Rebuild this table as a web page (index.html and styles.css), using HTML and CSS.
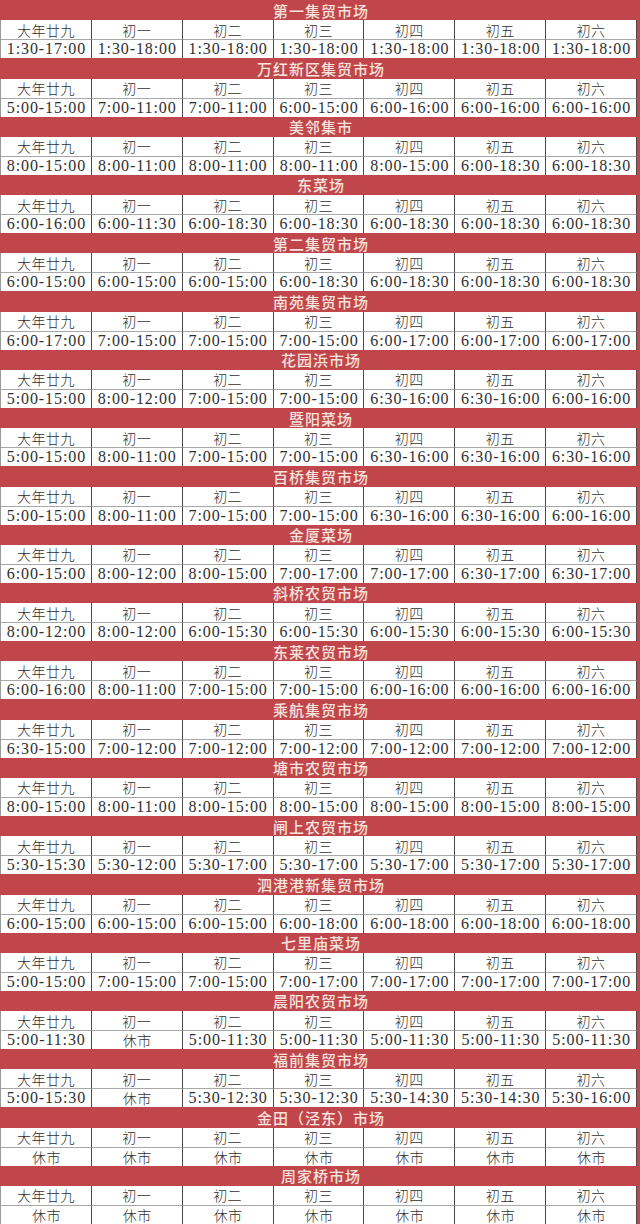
FILE: index.html
```html
<!DOCTYPE html>
<html lang="zh-CN">
<head>
<meta charset="utf-8">
<title>春节期间集贸市场营业时间</title>
<link rel="stylesheet" href="styles.css">
</head>
<body>
<div class="board">

<section class="market">
<div class="title">第一集贸市场</div>
<div class="c">大年廿九</div><div class="c">初一</div><div class="c">初二</div><div class="c">初三</div><div class="c">初四</div><div class="c">初五</div><div class="c">初六</div>
<div class="c t">1:30-17:00</div><div class="c t">1:30-18:00</div><div class="c t">1:30-18:00</div><div class="c t">1:30-18:00</div><div class="c t">1:30-18:00</div><div class="c t">1:30-18:00</div><div class="c t">1:30-18:00</div>
</section>

<section class="market">
<div class="title">万红新区集贸市场</div>
<div class="c">大年廿九</div><div class="c">初一</div><div class="c">初二</div><div class="c">初三</div><div class="c">初四</div><div class="c">初五</div><div class="c">初六</div>
<div class="c t">5:00-15:00</div><div class="c t">7:00-11:00</div><div class="c t">7:00-11:00</div><div class="c t">6:00-15:00</div><div class="c t">6:00-16:00</div><div class="c t">6:00-16:00</div><div class="c t">6:00-16:00</div>
</section>

<section class="market">
<div class="title">美邻集市</div>
<div class="c">大年廿九</div><div class="c">初一</div><div class="c">初二</div><div class="c">初三</div><div class="c">初四</div><div class="c">初五</div><div class="c">初六</div>
<div class="c t">8:00-15:00</div><div class="c t">8:00-11:00</div><div class="c t">8:00-11:00</div><div class="c t">8:00-11:00</div><div class="c t">8:00-15:00</div><div class="c t">6:00-18:30</div><div class="c t">6:00-18:30</div>
</section>

<section class="market">
<div class="title">东菜场</div>
<div class="c">大年廿九</div><div class="c">初一</div><div class="c">初二</div><div class="c">初三</div><div class="c">初四</div><div class="c">初五</div><div class="c">初六</div>
<div class="c t">6:00-16:00</div><div class="c t">6:00-11:30</div><div class="c t">6:00-18:30</div><div class="c t">6:00-18:30</div><div class="c t">6:00-18:30</div><div class="c t">6:00-18:30</div><div class="c t">6:00-18:30</div>
</section>

<section class="market">
<div class="title">第二集贸市场</div>
<div class="c">大年廿九</div><div class="c">初一</div><div class="c">初二</div><div class="c">初三</div><div class="c">初四</div><div class="c">初五</div><div class="c">初六</div>
<div class="c t">6:00-15:00</div><div class="c t">6:00-15:00</div><div class="c t">6:00-15:00</div><div class="c t">6:00-18:30</div><div class="c t">6:00-18:30</div><div class="c t">6:00-18:30</div><div class="c t">6:00-18:30</div>
</section>

<section class="market">
<div class="title">南苑集贸市场</div>
<div class="c">大年廿九</div><div class="c">初一</div><div class="c">初二</div><div class="c">初三</div><div class="c">初四</div><div class="c">初五</div><div class="c">初六</div>
<div class="c t">6:00-17:00</div><div class="c t">7:00-15:00</div><div class="c t">7:00-15:00</div><div class="c t">7:00-15:00</div><div class="c t">6:00-17:00</div><div class="c t">6:00-17:00</div><div class="c t">6:00-17:00</div>
</section>

<section class="market">
<div class="title">花园浜市场</div>
<div class="c">大年廿九</div><div class="c">初一</div><div class="c">初二</div><div class="c">初三</div><div class="c">初四</div><div class="c">初五</div><div class="c">初六</div>
<div class="c t">5:00-15:00</div><div class="c t">8:00-12:00</div><div class="c t">7:00-15:00</div><div class="c t">7:00-15:00</div><div class="c t">6:30-16:00</div><div class="c t">6:30-16:00</div><div class="c t">6:00-16:00</div>
</section>

<section class="market">
<div class="title">暨阳菜场</div>
<div class="c">大年廿九</div><div class="c">初一</div><div class="c">初二</div><div class="c">初三</div><div class="c">初四</div><div class="c">初五</div><div class="c">初六</div>
<div class="c t">5:00-15:00</div><div class="c t">8:00-11:00</div><div class="c t">7:00-15:00</div><div class="c t">7:00-15:00</div><div class="c t">6:30-16:00</div><div class="c t">6:30-16:00</div><div class="c t">6:30-16:00</div>
</section>

<section class="market">
<div class="title">百桥集贸市场</div>
<div class="c">大年廿九</div><div class="c">初一</div><div class="c">初二</div><div class="c">初三</div><div class="c">初四</div><div class="c">初五</div><div class="c">初六</div>
<div class="c t">5:00-15:00</div><div class="c t">8:00-11:00</div><div class="c t">7:00-15:00</div><div class="c t">7:00-15:00</div><div class="c t">6:30-16:00</div><div class="c t">6:30-16:00</div><div class="c t">6:00-16:00</div>
</section>

<section class="market">
<div class="title">金厦菜场</div>
<div class="c">大年廿九</div><div class="c">初一</div><div class="c">初二</div><div class="c">初三</div><div class="c">初四</div><div class="c">初五</div><div class="c">初六</div>
<div class="c t">6:00-15:00</div><div class="c t">8:00-12:00</div><div class="c t">8:00-15:00</div><div class="c t">7:00-17:00</div><div class="c t">7:00-17:00</div><div class="c t">6:30-17:00</div><div class="c t">6:30-17:00</div>
</section>

<section class="market">
<div class="title">斜桥农贸市场</div>
<div class="c">大年廿九</div><div class="c">初一</div><div class="c">初二</div><div class="c">初三</div><div class="c">初四</div><div class="c">初五</div><div class="c">初六</div>
<div class="c t">8:00-12:00</div><div class="c t">8:00-12:00</div><div class="c t">6:00-15:30</div><div class="c t">6:00-15:30</div><div class="c t">6:00-15:30</div><div class="c t">6:00-15:30</div><div class="c t">6:00-15:30</div>
</section>

<section class="market">
<div class="title">东莱农贸市场</div>
<div class="c">大年廿九</div><div class="c">初一</div><div class="c">初二</div><div class="c">初三</div><div class="c">初四</div><div class="c">初五</div><div class="c">初六</div>
<div class="c t">6:00-16:00</div><div class="c t">8:00-11:00</div><div class="c t">7:00-15:00</div><div class="c t">7:00-15:00</div><div class="c t">6:00-16:00</div><div class="c t">6:00-16:00</div><div class="c t">6:00-16:00</div>
</section>

<section class="market">
<div class="title">乘航集贸市场</div>
<div class="c">大年廿九</div><div class="c">初一</div><div class="c">初二</div><div class="c">初三</div><div class="c">初四</div><div class="c">初五</div><div class="c">初六</div>
<div class="c t">6:30-15:00</div><div class="c t">7:00-12:00</div><div class="c t">7:00-12:00</div><div class="c t">7:00-12:00</div><div class="c t">7:00-12:00</div><div class="c t">7:00-12:00</div><div class="c t">7:00-12:00</div>
</section>

<section class="market">
<div class="title">塘市农贸市场</div>
<div class="c">大年廿九</div><div class="c">初一</div><div class="c">初二</div><div class="c">初三</div><div class="c">初四</div><div class="c">初五</div><div class="c">初六</div>
<div class="c t">8:00-15:00</div><div class="c t">8:00-11:00</div><div class="c t">8:00-15:00</div><div class="c t">8:00-15:00</div><div class="c t">8:00-15:00</div><div class="c t">8:00-15:00</div><div class="c t">8:00-15:00</div>
</section>

<section class="market">
<div class="title">闸上农贸市场</div>
<div class="c">大年廿九</div><div class="c">初一</div><div class="c">初二</div><div class="c">初三</div><div class="c">初四</div><div class="c">初五</div><div class="c">初六</div>
<div class="c t">5:30-15:30</div><div class="c t">5:30-12:00</div><div class="c t">5:30-17:00</div><div class="c t">5:30-17:00</div><div class="c t">5:30-17:00</div><div class="c t">5:30-17:00</div><div class="c t">5:30-17:00</div>
</section>

<section class="market">
<div class="title">泗港港新集贸市场</div>
<div class="c">大年廿九</div><div class="c">初一</div><div class="c">初二</div><div class="c">初三</div><div class="c">初四</div><div class="c">初五</div><div class="c">初六</div>
<div class="c t">6:00-15:00</div><div class="c t">6:00-15:00</div><div class="c t">6:00-15:00</div><div class="c t">6:00-18:00</div><div class="c t">6:00-18:00</div><div class="c t">6:00-18:00</div><div class="c t">6:00-18:00</div>
</section>

<section class="market">
<div class="title">七里庙菜场</div>
<div class="c">大年廿九</div><div class="c">初一</div><div class="c">初二</div><div class="c">初三</div><div class="c">初四</div><div class="c">初五</div><div class="c">初六</div>
<div class="c t">5:00-15:00</div><div class="c t">7:00-15:00</div><div class="c t">7:00-15:00</div><div class="c t">7:00-17:00</div><div class="c t">7:00-17:00</div><div class="c t">7:00-17:00</div><div class="c t">7:00-17:00</div>
</section>

<section class="market">
<div class="title">晨阳农贸市场</div>
<div class="c">大年廿九</div><div class="c">初一</div><div class="c">初二</div><div class="c">初三</div><div class="c">初四</div><div class="c">初五</div><div class="c">初六</div>
<div class="c t">5:00-11:30</div><div class="c t off">休市</div><div class="c t">5:00-11:30</div><div class="c t">5:00-11:30</div><div class="c t">5:00-11:30</div><div class="c t">5:00-11:30</div><div class="c t">5:00-11:30</div>
</section>

<section class="market">
<div class="title">福前集贸市场</div>
<div class="c">大年廿九</div><div class="c">初一</div><div class="c">初二</div><div class="c">初三</div><div class="c">初四</div><div class="c">初五</div><div class="c">初六</div>
<div class="c t">5:00-15:30</div><div class="c t off">休市</div><div class="c t">5:30-12:30</div><div class="c t">5:30-12:30</div><div class="c t">5:30-14:30</div><div class="c t">5:30-14:30</div><div class="c t">5:30-16:00</div>
</section>

<section class="market">
<div class="title">金田（泾东）市场</div>
<div class="c">大年廿九</div><div class="c">初一</div><div class="c">初二</div><div class="c">初三</div><div class="c">初四</div><div class="c">初五</div><div class="c">初六</div>
<div class="c t off">休市</div><div class="c t off">休市</div><div class="c t off">休市</div><div class="c t off">休市</div><div class="c t off">休市</div><div class="c t off">休市</div><div class="c t off">休市</div>
</section>

<section class="market">
<div class="title">周家桥市场</div>
<div class="c">大年廿九</div><div class="c">初一</div><div class="c">初二</div><div class="c">初三</div><div class="c">初四</div><div class="c">初五</div><div class="c">初六</div>
<div class="c t off">休市</div><div class="c t off">休市</div><div class="c t off">休市</div><div class="c t off">休市</div><div class="c t off">休市</div><div class="c t off">休市</div><div class="c t off">休市</div>
</section>

</div>
</body>
</html>
```

FILE: styles.css
```css
html, body {
  margin: 0;
  padding: 0;
  background: #ffffff;
}

.board {
  width: 640px;
  display: flex;
  flex-direction: column;
  font-family: "Liberation Serif", "Noto Sans CJK SC", serif;
  color: #2f2f2f;
}

.market {
  height: 58.2857px;
  display: grid;
  grid-template-columns: repeat(7, 1fr);
  grid-template-rows: 20.2857px 19px 19px;
  border-left: 1px solid #9a9a9a;
  border-right: 3px solid #c0474b;
  box-sizing: border-box;
}

.title {
  grid-column: 1 / -1;
  margin-left: -1px;
  margin-right: -3px;
  display: flex;
  align-items: center;
  justify-content: center;
  background: #c0464b;
  color: #f7e2dd;
  font-family: "Noto Sans CJK SC", sans-serif;
  font-weight: 500;
  font-size: 15px;
  line-height: 1;
  letter-spacing: 1px;
  padding-left: 2px;
}

.c {
  display: flex;
  align-items: center;
  justify-content: center;
  box-sizing: border-box;
  border-right: 1px solid #4a4a4a;
  font-family: "Noto Sans CJK SC", sans-serif;
  font-weight: 300;
  font-size: 14px;
  letter-spacing: 0.5px;
  line-height: 1;
  white-space: nowrap;
}

.t {
  border-top: 1px solid #a8a8a8;
  font-family: "Liberation Serif", "Noto Sans CJK SC", serif;
  font-weight: 400;
  font-size: 16px;
  letter-spacing: 0.9px;
  padding-left: 1px;
}

.t.off {
  font-family: "Noto Sans CJK SC", sans-serif;
  font-weight: 300;
  font-size: 14px;
  letter-spacing: 0.5px;
}
```
